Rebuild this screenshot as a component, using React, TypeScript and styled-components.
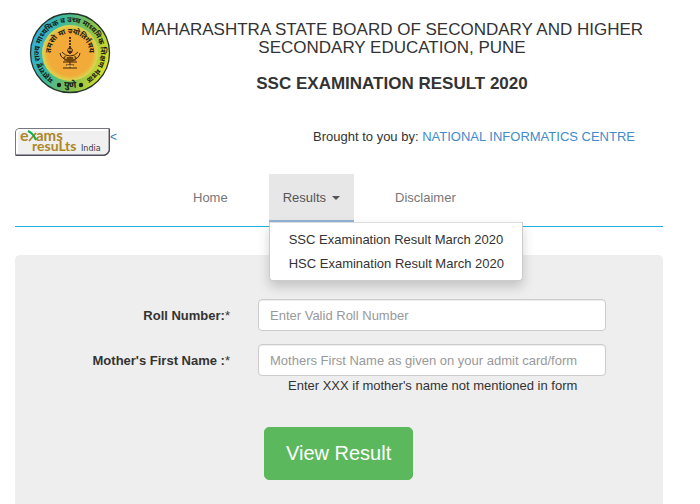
import React from "react";
import styled, { createGlobalStyle } from "styled-components";

const GlobalStyle = createGlobalStyle`
  *, *::before, *::after { box-sizing: border-box; }
  body {
    margin: 0;
    background: #fff;
    color: #333;
    font-family: "Liberation Sans", Arial, sans-serif;
    font-size: 13px;
    line-height: 18px;
  }
`;

const Page = styled.div`
  display: flex;
  flex-direction: column;
  min-height: 100vh;
  padding: 12px 37px 0 15px;
`;

const Header = styled.header`
  display: grid;
  grid-template-columns: 106px 1fr;
`;

const Seal = styled.svg`
  display: block;
  width: 82px;
  height: 82px;
  margin-left: 14px;
  overflow: visible;
`;

const Titles = styled.div`
  padding-top: 9px;
  text-align: center;
`;

const BoardName = styled.h1`
  margin: 0 0 18px;
  font-size: 17px;
  font-weight: 400;
  line-height: 18px;
`;

const ExamName = styled.h2`
  margin: 0;
  font-size: 17px;
  font-weight: 700;
  line-height: 18px;
`;

const BrandRow = styled.div`
  display: flex;
  justify-content: space-between;
  align-items: flex-start;
  margin-top: 34px;
  padding-right: 28px;
  height: 28px;
`;

const Brand = styled.a`
  display: flex;
  color: #337ab7;
  text-decoration: none;
  font-size: 12px;
`;

const BrandLogo = styled.svg`
  display: block;
  width: 95px;
  height: 28px;
  overflow: visible;
`;

const Credit = styled.p`
  margin: 0;
`;

const CreditLink = styled.a`
  color: #428bca;
  text-decoration: none;
`;

const Nav = styled.nav`
  display: flex;
  gap: 27px;
  margin-top: 18px;
  padding: 0 0 4px 164px;
  border-bottom: 1px solid #1fb0e0;
`;

const NavLink = styled.a`
  padding: 15px 14px;
  color: #777;
  text-decoration: none;
`;

const NavItem = styled.div`
  position: relative;
`;

const NavToggle = styled.button`
  display: flex;
  align-items: center;
  gap: 6px;
  height: 48px;
  padding: 1px 14px 0;
  border: 0;
  border-bottom: 2px solid #8fb3d6;
  background: #e7e7e7;
  color: #555;
  font: inherit;
`;

const Caret = styled.span`
  border: 4px solid transparent;
  border-top-color: #555;
  border-bottom: 0;
`;

const Menu = styled.ul`
  position: absolute;
  z-index: 1;
  top: 100%;
  left: 0;
  margin: 0;
  padding: 5px 0 4px;
  border: 1px solid #ccc;
  border-top-color: #ddd;
  border-radius: 0 0 4px 4px;
  background: #fff;
  box-shadow: 0 6px 12px rgba(0, 0, 0, 0.18);
  list-style: none;
  white-space: nowrap;
`;

const MenuLink = styled.a`
  display: block;
  padding: 3px 18px 3px 19px;
  color: #333;
  text-decoration: none;
`;

const Panel = styled.form`
  flex: 1;
  margin-top: 28px;
  padding: 44px 57px 8px 0;
  border-radius: 5px 5px 0 0;
  background: #eee;
`;

const Field = styled.div`
  display: grid;
  grid-template-columns: 215px 1fr;
  column-gap: 28px;
  margin-bottom: 13px;
`;

const Label = styled.label`
  padding-top: 8px;
  font-weight: 700;
  text-align: right;
`;

const Required = styled.span`
  font-weight: 400;
`;

const Input = styled.input`
  display: block;
  width: 100%;
  height: 32px;
  padding: 0 11px;
  border: 1px solid #ccc;
  border-radius: 4px;
  background: #fff;
  box-shadow: inset 0 1px 1px rgba(0, 0, 0, 0.075);
  color: #555;
  font: inherit;
  &::placeholder { color: #999; opacity: 1; }
`;

const Hint = styled.p`
  margin: 0;
  padding: 1px 0 0 30px;
`;

const Actions = styled.div`
  margin-top: 32px;
  padding-left: 249px;
`;

const Submit = styled.button`
  height: 53px;
  padding: 0 21px;
  border: 1px solid #5cb85c;
  border-radius: 5px;
  background: #5cb85c;
  color: #fff;
  font-family: inherit;
  font-size: 20px;
`;

const BoardSeal = () => (
  <Seal viewBox="0 0 82 82" role="img" aria-label="महाराष्ट्र राज्य माध्यमिक व उच्च माध्यमिक शिक्षण मंडळ">
    <defs>
      <linearGradient id="ring" x1="0" x2="1" y1="0.35" y2="0.65">
        <stop offset="0" stopColor="#35aee0" />
        <stop offset="0.3" stopColor="#3bb99d" />
        <stop offset="0.65" stopColor="#86bf4e" />
        <stop offset="1" stopColor="#e6e322" />
      </linearGradient>
      <radialGradient id="core">
        <stop offset="0.8" stopColor="#f2aa38" />
        <stop offset="1" stopColor="#d8d951" />
      </radialGradient>
      <path id="outer" d="M24 66.500 A30.700 30.700 0 1 1 58 66.500" />
      <path id="inner" d="M27 54 A19.200 19.200 0 1 1 55 54" />
      <path id="bottom" d="M27 73 Q41 79 55 73" />
    </defs>
    <circle cx="41" cy="41" r="39.5" fill="url(#ring)" stroke="#253329" strokeWidth="1.3" />
    <circle cx="41" cy="41" r="28" fill="url(#core)" />
    <g fill="#172016" fontFamily='"Noto Sans", "Noto Sans Devanagari", sans-serif' fontWeight="700" textAnchor="middle">
      <text fontSize="7.500"><textPath href="#outer" startOffset="50%">महाराष्ट्र राज्य माध्यमिक व उच्च माध्यमिक शिक्षण मंडळ</textPath></text>
      <text fontSize="7.500"><textPath href="#inner" startOffset="50%">तमसो मा ज्योतिर्गमय</textPath></text>
      <text fontSize="9"><textPath href="#bottom" startOffset="50%">पुणे</textPath></text>
    </g>
    <circle cx="30" cy="73" r="2.2" fill="#172016" />
    <circle cx="52" cy="73" r="2.2" fill="#172016" />
    <g fill="none" stroke="#43250f" strokeWidth="1">
      <path d="M41 25v17" strokeDasharray="2 1" strokeWidth="1.800" />
      <path d="M31 41q1 7 10 7t10-7M33 40q3 4 8 4t8-4M34 50h14M37 53h8M34 56h14" />
      <path d="M41 48v8M36 44v5M46 44v5" />
    </g>
    <path d="M38 38l3-4 3 4-1 3h-4z" fill="#542b10" />
    <path d="M34 45h14l-4 5h-6z" fill="#74450d" />
    <path d="M39 38h4M36 46h2M44 46h2M38 54h6" stroke="#ffdf73" />
  </Seal>
);

const ExamsLogo = () => (
  <BrandLogo viewBox="0 0 95 28" role="img" aria-label="exams results India">
    <path d="M4 .5h90.500v22q-1 4-5 5H.5V4q0-3 3.500-3.500z" fill="#f0f0f0" stroke="#77777f" />
    <path d="M2 25V5q0-3 3-3h88" fill="none" stroke="#fff" strokeWidth="2" />
    <path d="M1 27.300h88q4-1 5.300-5V1" fill="none" stroke="#4b4b5b" strokeWidth="1.400" />
    <g fill="#ad8728" fontFamily="Lato, sans-serif" fontWeight="700">
      <text x="5" y="13" fontSize="16">e</text>
      <text x="21" y="13" fontSize="15">ams</text>
      <text x="17" y="23" fontSize="14">resuLts</text>
    </g>
    <path d="M21 5l-7 8" stroke="#ad8728" strokeWidth="1.800" />
    <path d="M13 3q5 2 8 9" fill="none" stroke="#11ad4d" strokeWidth="2" />
    <text x="66" y="23" fill="#353545" fontFamily="DejaVu Sans, sans-serif" fontSize="8">India</text>
  </BrandLogo>
);

export default function App() {
  return (
    <>
      <GlobalStyle />
      <Page>
        <Header>
          <BoardSeal />
          <Titles>
            <BoardName>MAHARASHTRA STATE BOARD OF SECONDARY AND HIGHER SECONDARY EDUCATION, PUNE</BoardName>
            <ExamName>SSC EXAMINATION RESULT 2020</ExamName>
          </Titles>
        </Header>
        <BrandRow>
          <Brand href="#"><ExamsLogo />&lt;</Brand>
          <Credit>Brought to you by: <CreditLink href="#">NATIONAL INFORMATICS CENTRE</CreditLink></Credit>
        </BrandRow>
        <Nav>
          <NavLink href="#">Home</NavLink>
          <NavItem>
            <NavToggle type="button" aria-haspopup="true" aria-expanded="true">Results <Caret /></NavToggle>
            <Menu>
              <li><MenuLink href="#">SSC Examination Result March 2020</MenuLink></li>
              <li><MenuLink href="#">HSC Examination Result March 2020</MenuLink></li>
            </Menu>
          </NavItem>
          <NavLink href="#">Disclaimer</NavLink>
        </Nav>
        <Panel>
          <Field>
            <Label htmlFor="roll">Roll Number:<Required>*</Required></Label>
            <Input id="roll" placeholder="Enter Valid Roll Number" />
          </Field>
          <Field>
            <Label htmlFor="mother">Mother's First Name :<Required>*</Required></Label>
            <div>
              <Input id="mother" aria-describedby="mother-hint" placeholder="Mothers First Name as given on your admit card/form" />
              <Hint id="mother-hint">Enter XXX if mother's name not mentioned in form</Hint>
            </div>
          </Field>
          <Actions><Submit type="button">View Result</Submit></Actions>
        </Panel>
      </Page>
    </>
  );
}
